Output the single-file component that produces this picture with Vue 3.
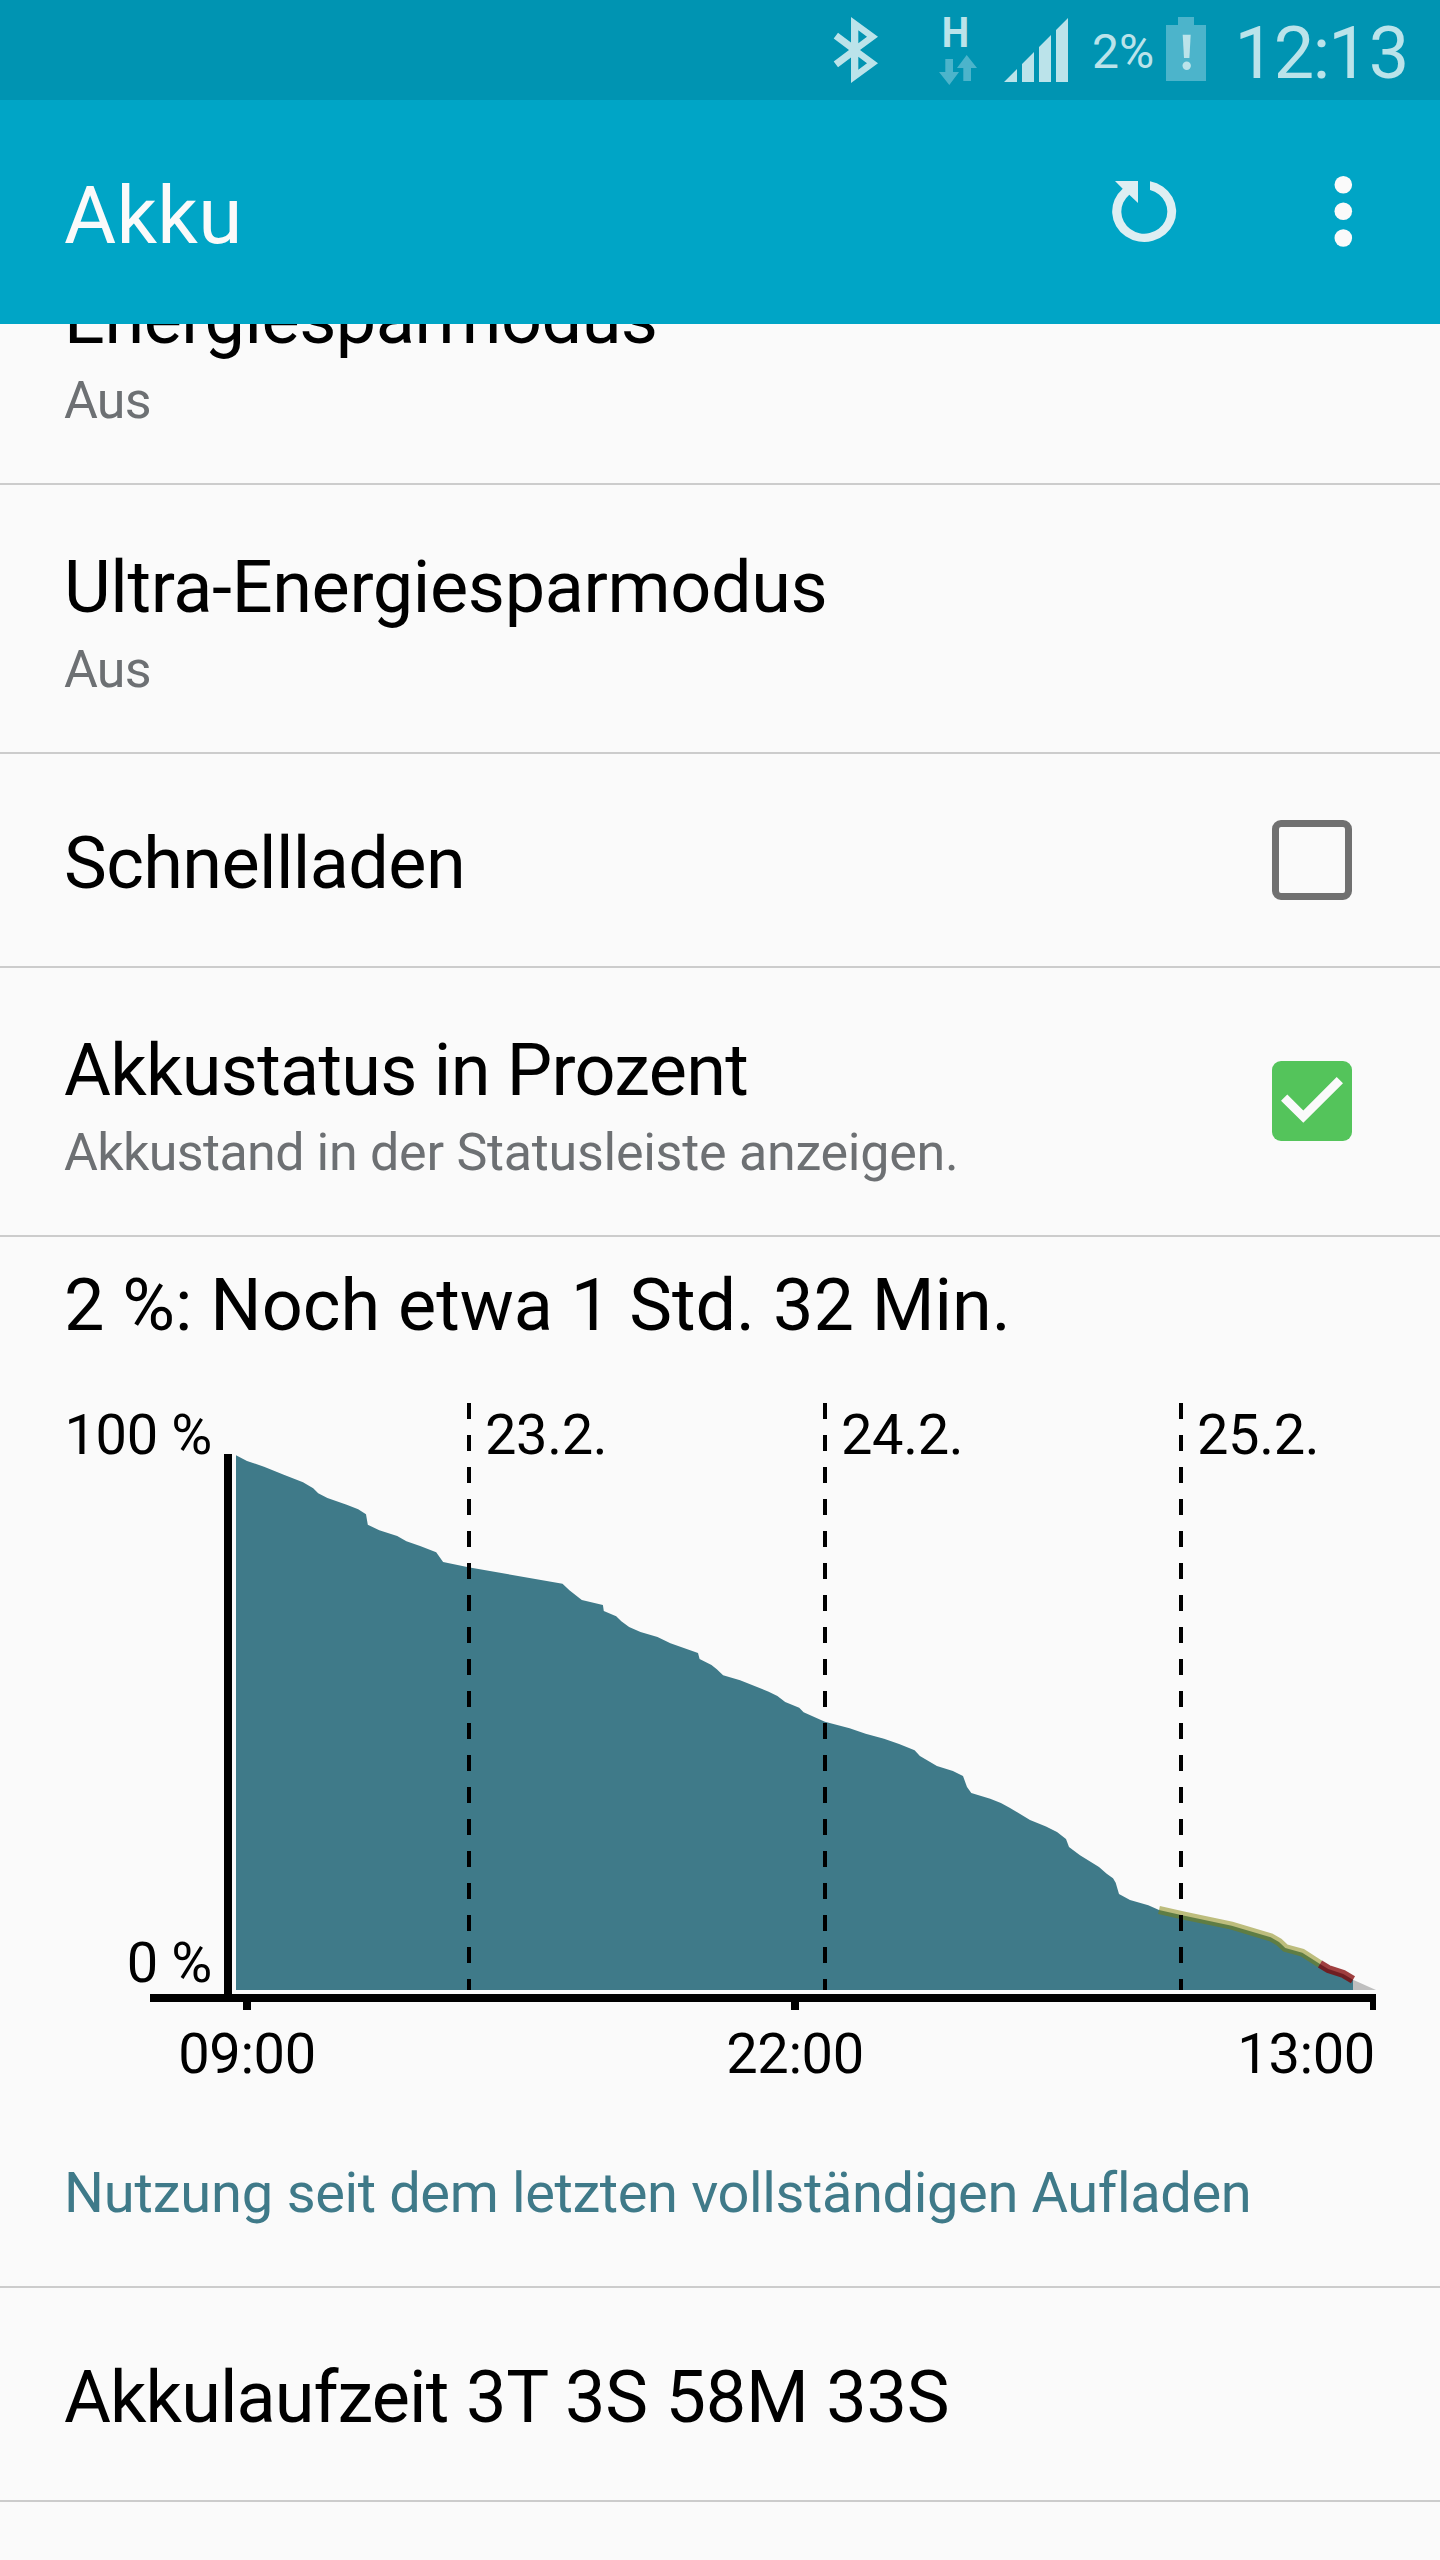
<script setup>
// Labels are lists of [text, tracking in px] runs
const rows = [
  { id: 'saver', title: [['Energiesparmodus', -0.5]], sub: [['Aus', -0.8]] },
  { id: 'ultra', title: [['Ultra-Energiesparmodus', -0.36]], sub: [['Aus', -0.8]] },
  { id: 'fast', title: [['Schnellladen', -0.6]], check: true, on: false },
  {
    id: 'percent',
    title: [['Akkustatus in Prozent', -0.72]],
    sub: [['Akkustand', -0.62], [' in der Statusleiste anzeigen.', -0.26]],
    check: true,
    on: true
  }
]
const usage = [['Nutzung', -0.15], [' seit dem letzten vollständigen Aufladen', -0.38]]
const runtime = [['Akkulaufzeit', -0.93], [' 3T 3S 58M 33S', -0.23]]

const level = [
  [236, 1455.3], [247, 1461], [264, 1466.7], [283.8, 1474.7], [303, 1482.3], [313.2, 1488.3],
  [318.2, 1493.3], [327.4, 1498], [346.7, 1504.7], [358.2, 1509.3], [366, 1514.3], [367.8, 1524.7],
  [379.3, 1530.3], [397.2, 1536], [406.4, 1541.3], [420.1, 1546], [436.2, 1552.3], [443.1, 1562],
  [468.4, 1567.3], [562.5, 1583.7], [569.4, 1590.3], [581.8, 1600], [602.9, 1605], [603.8, 1611],
  [616.2, 1616.3], [621.3, 1621.3], [629.1, 1627], [640.5, 1632], [657.5, 1637], [670.4, 1643.3],
  [698, 1653], [699.6, 1659], [711.5, 1665], [716.8, 1669.3], [723.1, 1675.3], [740.1, 1680.3],
  [768.7, 1691.7], [777.4, 1696], [785.2, 1702], [799.2, 1707.7], [803.6, 1712.3], [824.9, 1721.7],
  [849.6, 1728.3], [865.6, 1733.7], [884, 1738.7], [899.1, 1744], [914.6, 1750.3], [919.9, 1756],
  [936.9, 1766], [952.9, 1771], [963, 1776], [967, 1787], [971.3, 1793], [990.2, 1798.7],
  [1000.9, 1803], [1009.6, 1807.7], [1030, 1820], [1046, 1826.5], [1057, 1832], [1066, 1839],
  [1069, 1847], [1080, 1855.3], [1099, 1867], [1106.7, 1873.7], [1113, 1878.3], [1115.7, 1882.7],
  [1117.3, 1888.3], [1119, 1894], [1130, 1900], [1148.3, 1905.3]
]
const warning = [
  [1159, 1910], [1183.3, 1915.5], [1231.7, 1925.7], [1270.7, 1937.3], [1279, 1942],
  [1285.3, 1948], [1302.3, 1952.7], [1320, 1964]
]
const critical = [[1320, 1964], [1328.3, 1969], [1343.3, 1974], [1353, 1979.7]]

const points = (list) => list.map((p) => p.join(',')).join(' ')
const area = points([...level, ...warning, ...critical, [1353, 1990], [236, 1990]])

const days = [
  { x: 469, label: '23.2.' },
  { x: 825, label: '24.2.' },
  { x: 1181, label: '25.2.' }
]
</script>

<template>
  <div class="screen">
    <header class="status">
      <svg width="1440" height="100" viewBox="0 0 1440 100">
        <path class="lit" fill-rule="evenodd" d="M851 17L878 36.7L860 50L878 63.3L851 83V57.5L838 67.2L833.7 61.5L849 50L833.7 38.5L838 32.8L851 42.5ZM858.3 30.3V43.2L867 36.7ZM858.3 56.8V69.7L867 63.3Z" />
        <text class="lit bold" x="941.8" y="47" font-size="42" textLength="27.4" lengthAdjust="spacingAndGlyphs">H</text>
        <path class="dim" d="M945.3 59H953V72H959L949.3 85L939 72H945.3ZM966.7 55L977 68H971V81H963.3V68H957Z" />
        <path class="lit" d="M1004 82L1017 69V82ZM1022 82V64L1034 52V82ZM1039 82V47L1051 35V82ZM1056 82V30L1068 18V82Z" />
        <text class="lit" x="1092" y="68" font-size="48">2%</text>
        <path class="dim" d="M1178 17H1194V25H1206V81H1166V25H1178Z" />
        <path class="lit" d="M1182.7 34.7H1190.7L1189.4 58H1184Z" />
        <circle class="lit" cx="1186.7" cy="65.7" r="4.2" />
        <text class="lit" x="1234.5" y="78" dx="0 -1.2 -1.6 -1.8" font-size="72">12:13</text>
      </svg>
    </header>

    <header class="bar">
      <h1>Akku</h1>
      <svg class="actions" width="280" height="100" viewBox="1100 160 280 100">
        <path fill="#deeef2" d="M1150 181.3A32 30.6 0 1 1 1122.7 188.7L1115 181H1138V203L1129.3 194.7A23 22.2 0 1 0 1150 190Z" />
        <g fill="#fafafa">
          <circle cx="1343.3" cy="184.7" r="8.8" />
          <circle cx="1343.3" cy="211.3" r="8.8" />
          <circle cx="1343.3" cy="238" r="8.8" />
        </g>
      </svg>
    </header>

    <main class="content">
      <section v-for="row in rows" :key="row.id" class="row" :class="{ double: row.sub }">
        <div class="labels">
          <div class="title">
            <span v-for="[text, track] in row.title" :key="text" :style="{ letterSpacing: track + 'px' }">{{ text }}</span>
          </div>
          <div v-if="row.sub" class="sub">
            <span v-for="[text, track] in row.sub" :key="text" :style="{ letterSpacing: track + 'px' }">{{ text }}</span>
          </div>
        </div>
        <div v-if="row.check" class="check" :class="{ on: row.on }">
          <svg v-if="row.on" width="80" height="80" viewBox="0 0 80 80">
            <path fill="#fafafa" d="M9 39.8L15.3 33.6L31.3 49.4L64.7 16L71 22.2L31.3 61.8Z" />
          </svg>
        </div>
      </section>

      <section class="battery">
        <div class="title">2 %: Noch etwa 1 Std. 32 Min.</div>
        <svg class="chart" width="1440" height="812" viewBox="0 1348 1440 812">
          <polygon points="1353,1979.7 1376,1990 1353,1990" fill="#bfbfbf" />
          <polygon :points="area" fill="#3f7a89" />
          <polyline :points="points(warning)" class="trace" stroke="rgba(128,128,0,.5)" />
          <polyline :points="points(critical)" class="trace" stroke="rgba(128,0,0,.75)" />
          <g v-for="day in days" :key="day.label">
            <line :x1="day.x" :x2="day.x" y1="1403" y2="1990" stroke="#000" stroke-width="4" stroke-dasharray="16 16" />
            <text :x="day.x + 16" y="1454">{{ day.label }}</text>
          </g>
          <path d="M224 1454H232V1994H1376V2010H1370V2002H799V2010H791V2002H251V2010H243V2002H150V1994H224Z" />
          <text x="212" y="1454" text-anchor="end">100 %</text>
          <text x="212" y="1982" text-anchor="end">0 %</text>
          <text x="247" y="2073" text-anchor="middle">09:00</text>
          <text x="795" y="2073" text-anchor="middle">22:00</text>
          <text x="1375" y="2073" text-anchor="end">13:00</text>
        </svg>
        <div class="usage">
          <span v-for="[text, track] in usage" :key="text" :style="{ letterSpacing: track + 'px' }">{{ text }}</span>
        </div>
      </section>

      <section class="row">
        <div class="title">
          <span v-for="[text, track] in runtime" :key="text" :style="{ letterSpacing: track + 'px' }">{{ text }}</span>
        </div>
      </section>
    </main>
  </div>
</template>

<style>
body {
  margin: 0;
  background: #fafafa;
}
</style>

<style scoped>
.screen {
  width: 1440px;
  height: 2560px;
  overflow: hidden;
  display: flex;
  flex-direction: column;
  background: #fafafa;
  color: #000;
  font-family: Roboto, sans-serif;
}
svg {
  display: block;
}
.status {
  height: 100px;
  flex: none;
  background: #0094b2;
}
.lit {
  fill: #bbe3ea;
}
.dim {
  fill: #4cb4cb;
}
.bold {
  font-weight: 700;
}
.bar {
  height: 224px;
  flex: none;
  box-sizing: border-box;
  padding: 60px 60px 0 64px;
  display: flex;
  justify-content: space-between;
  align-items: flex-start;
  background: #00a5c6;
}
h1 {
  margin: 9px 0 0;
  font-size: 80px;
  line-height: 94px;
  font-weight: 400;
  letter-spacing: 0.3px;
  color: #fafafa;
}
.content {
  flex: 1;
  min-height: 0;
  overflow: hidden;
}
.content > .row:first-child {
  margin-top: -108px;
}
.row {
  box-sizing: border-box;
  height: 214px;
  padding: 0 88px 0 64px;
  display: flex;
  justify-content: space-between;
  align-items: center;
  border-bottom: 2px solid #ccc;
}
.row.double {
  height: 269px;
}
.title,
.sub,
.usage {
  white-space: pre;
}
.title {
  font-size: 72px;
  line-height: 85px;
}
.row:not(.double) .title {
  padding-top: 7px;
}
.double .labels {
  padding-top: 8px;
}
.sub {
  margin-top: 9px;
  font-size: 52px;
  line-height: 61px;
  color: #6d7073;
}
.check {
  box-sizing: border-box;
  flex: none;
  width: 80px;
  height: 80px;
  border: 7px solid #707070;
  border-radius: 9px;
}
.check.on {
  border: 0;
  background: #54c45b;
}
.double .check {
  margin-bottom: 1px;
}
.battery {
  height: 1051px;
  box-sizing: border-box;
  padding-top: 26px;
  border-bottom: 2px solid #ccc;
}
.battery .title {
  padding-left: 64px;
}
.chart {
  font-size: 56px;
  letter-spacing: -0.35px;
}
.trace {
  fill: none;
  stroke-width: 8;
}
.usage {
  padding-left: 64px;
  font-size: 56px;
  line-height: 66px;
  color: #3f7a89;
}
</style>
